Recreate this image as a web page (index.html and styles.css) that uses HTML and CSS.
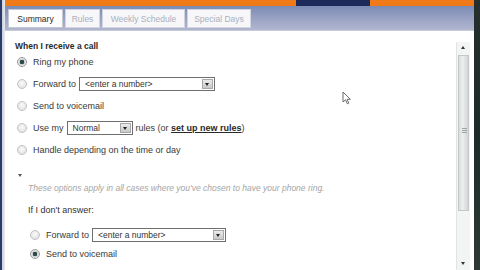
FILE: index.html
```html
<!DOCTYPE html>
<html>
<head>
<meta charset="utf-8">
<link rel="stylesheet" href="styles.css">
</head>
<body>
<div class="screen">
  <div class="edge-left"></div>
  <div class="main">
    <div class="topbar">
      <div class="orange a"></div>
      <div class="navy"></div>
      <div class="orange b"></div>
    </div>
    <div class="tabbar">
      <div class="tab active">Summary</div>
      <div class="tab">Rules</div>
      <div class="tab">Weekly Schedule</div>
      <div class="tab">Special Days</div>
    </div>
    <div class="body">
      <div class="content">
        <div class="heading">When I receive a call</div>
        <div class="row"><span class="radio on"></span><span>Ring my phone</span></div>
        <div class="row"><span class="radio"></span><span>Forward to</span>
          <span class="select wide"><span class="val">&lt;enter a number&gt;</span><span class="btn"></span></span></div>
        <div class="row"><span class="radio"></span><span>Send to voicemail</span></div>
        <div class="row"><span class="radio"></span><span>Use my</span>
          <span class="select small"><span class="val">Normal</span><span class="btn"></span></span>
          <span>rules (or <a class="link">set up new rules</a>)</span></div>
        <div class="row"><span class="radio"></span><span>Handle depending on the time or day</span></div>
        <div class="toggle"><span class="tri"></span></div>
        <div class="sub">
          <div class="note">These options apply in all cases where you've chosen to have your phone ring.</div>
          <div class="label">If I don't answer:</div>
          <div class="row short first"><span class="radio"></span><span>Forward to</span>
            <span class="select wide2"><span class="val">&lt;enter a number&gt;</span><span class="btn"></span></span></div>
          <div class="row short"><span class="radio on"></span><span>Send to voicemail</span></div>
        </div>
      </div>
      <div class="scrollbar">
        <div class="arrow up"></div>
        <div class="track">
          <div class="thumb"><span class="grip"></span></div>
        </div>
        <div class="arrow down"></div>
      </div>
    </div>
  </div>
  <div class="edge-right"></div>
  <svg class="cursor" width="10" height="14" viewBox="0 0 10 14"><path d="M1 1 L1 11 L3.5 8.8 L5.3 12.8 L6.8 12.1 L5.1 8.3 L8.4 8.3 Z" fill="#fff" stroke="#6a6a6a" stroke-width="1"/></svg>
</div>
</body>
</html>
```
FILE: styles.css
```css
html, body { margin: 0; padding: 0; }
body { width: 480px; height: 270px; overflow: hidden; background: #1f2a2a; font-family: "Liberation Sans", Arial, sans-serif; }
.screen { position: relative; display: flex; width: 480px; height: 270px; }
.edge-left { width: 5px; background: linear-gradient(to right, #2a3c6a 0, #2a3c6a 2px, #c9cfdc 2px, #e8ebf0 5px); }
.edge-right { width: 6px; background: linear-gradient(to bottom, #26302e, #1c2b28 50%, #2d3a36); }
.main { flex: 1; display: flex; flex-direction: column; min-width: 0; }
.topbar { height: 6px; display: flex; }
.orange { background: #f07a18; }
.orange.a { width: 291px; }
.navy { width: 74px; background: #1c2b5a; }
.orange.b { flex: 1; }
.tabbar { height: 25px; background: linear-gradient(to bottom, #7a8bb4, #9ea6c6 60%, #b1b6d0); display: flex; align-items: flex-end; padding-left: 3px; gap: 2px; border-bottom: 1px solid #c8ccd8; box-sizing: border-box; }
.tab { height: 19px; margin-bottom: 2px; box-sizing: border-box; padding: 0 4px; display: flex; align-items: center; justify-content: center; font-size: 8.5px; color: #a9b0be; background: #f7f7f9; border: 1px solid #d2d5de; }
.tab.active { color: #2a2a2a; background: #fdfdfd; border-color: #c4c8d2; }
.tab:nth-child(1) { width: 55px; }
.tab:nth-child(2) { width: 35px; }
.tab:nth-child(3) { width: 83px; }
.tab:nth-child(4) { width: 64px; }
.body { flex: 1; display: flex; background: #fff; min-height: 0; }
.content { flex: 1; padding: 10px 0 0 10px; color: #3a3a3a; font-size: 9px; overflow: hidden; white-space: nowrap; }
.heading { font-weight: bold; font-size: 8.5px; line-height: 10px; height: 10px; color: #2a2a2a; }
.row { display: flex; align-items: center; height: 22px; padding-left: 2px; }
.row.short { height: 19px; }
.row.first { margin-top: 10px; }
.radio { width: 8px; height: 8px; border-radius: 50%; border: 1px solid #c2c2c2; background: radial-gradient(circle at 50% 40%, #fafafa, #dcdcdc); margin-right: 6px; flex: none; position: relative; }
.radio.on { border-color: #9a9a9a; background: radial-gradient(circle, #2d4a4a 0, #2d4a4a 2px, #c8cccc 2.5px, #eee 4px); }
.select { display: inline-flex; align-items: center; height: 14px; box-sizing: border-box; border: 1px solid #6f6f6f; background: #fff; margin: 0 3px; font-size: 8.5px; }
.select.wide { width: 136px; }
.select.small { width: 66px; }
.select.wide2 { width: 134px; }
.select .val { flex: 1; padding-left: 5px; color: #333; }
.select .btn { width: 11px; height: 10px; margin-right: 1px; background: linear-gradient(#eaeaea, #c9c9c9); border: 1px solid #a8a8a8; box-sizing: border-box; position: relative; }
.select .btn::after { content: ""; position: absolute; left: 2px; top: 3px; border-left: 2.5px solid transparent; border-right: 2.5px solid transparent; border-top: 3px solid #222; }
.link { font-weight: bold; text-decoration: underline; color: #2a2a2a; }
.toggle { margin-top: 8px; height: 12px; display: flex; align-items: center; padding-left: 3px; }
.tri { width: 0; height: 0; border-left: 2.5px solid transparent; border-right: 2.5px solid transparent; border-top: 3px solid #555; }
.sub { padding-left: 13px; }
.note { margin-top: 2px; line-height: 10px; font-style: italic; color: #a5a5a5; font-size: 8.5px; }
.label { margin-top: 12px; line-height: 10px; color: #333; }
.scrollbar { width: 13px; margin: 11px 4px 0 0; display: flex; flex-direction: column; background: #f3f4f4; border-left: 1px solid #e2e4e4; }
.arrow { height: 10px; position: relative; }
.arrow::after { content: ""; position: absolute; left: 4px; border-left: 2.5px solid transparent; border-right: 2.5px solid transparent; }
.arrow.up::after { top: 4px; border-bottom: 3px solid #333; }
.arrow.down::after { top: 2px; border-top: 3px solid #333; }
.track { flex: 1; padding: 3px 1px 0 1px; }
.thumb { height: 156px; background: linear-gradient(to right, #d9dcdc, #eef0f0 40%, #d2d5d5); border: 1px solid #c4c8c8; box-sizing: border-box; position: relative; }
.grip { position: absolute; left: 3px; top: 72px; width: 5px; height: 6px; background: repeating-linear-gradient(#9ea2a2 0 1px, transparent 1px 2px); }
.cursor { position: absolute; left: 342px; top: 91px; }
```
